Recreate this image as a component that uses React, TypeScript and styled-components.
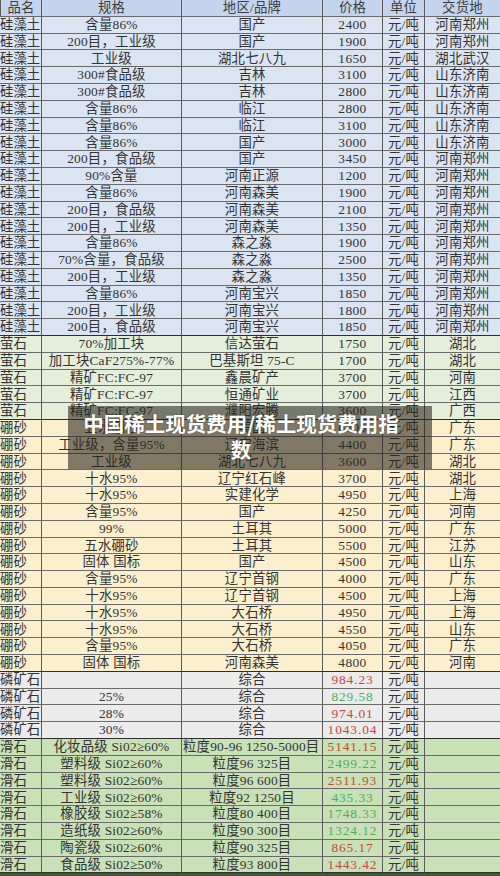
import React from 'react';
import styled, { createGlobalStyle } from 'styled-components';

const GlobalStyle = createGlobalStyle`
  html, body {
    margin: 0;
    padding: 0;
    background: #fff;
  }
  body {
    font-family: "Liberation Serif", "Noto Sans CJK SC", serif;
  }
`;

const Page = styled.div`
  position: relative;
  width: 500px;
  height: 876px;
  overflow: hidden;
  background: #3d5a33;
`;

const Table = styled.div`
  display: grid;
  grid-template-columns: 41px 140px 141px 60px 42px 76px;
  grid-auto-rows: 16.8px;
  border-left: 1px solid #5c5c5c;
  box-sizing: border-box;
`;

const Cell = styled.div<{ $bg: string; $align?: string; $color?: string; $thick?: boolean }>`
  display: flex;
  align-items: center;
  justify-content: ${p => p.$align || 'center'};
  box-sizing: border-box;
  background: ${p => p.$bg};
  color: ${p => p.$color || '#333'};
  border-right: 1px solid #5c5c5c;
  border-bottom: 1px solid ${p => (p.$thick ? '#2e2e2e' : '#6a6a6a')};
  font-size: 13.4px;
  line-height: 1;
  white-space: nowrap;
  overflow: visible;
  padding: 0 1px;
  letter-spacing: 0.2px;
`;

const NameCell = styled(Cell)`
  justify-content: flex-start;
  padding-left: 0;
  letter-spacing: 0;
  margin-left: -1px;
`;

const PriceCell = styled(Cell)`
  letter-spacing: ${p => (p.$color ? '0.9px' : '0.4px')};
`;

const Overlay = styled.div`
  position: absolute;
  left: 68px;
  top: 406px;
  width: 364px;
  box-sizing: border-box;
  padding: 4px 26px 7px 8px;
  background: rgba(40, 36, 28, 0.58);
  color: #fff;
  font-family: "Noto Sans CJK SC", "Noto Sans", sans-serif;
  font-weight: 700;
  font-size: 20.5px;
  line-height: 26px;
  text-align: center;
  text-shadow: 0 0 2px rgba(0, 0, 0, 0.35);
`;

type Row = [string, string, string, string, string?];

interface Group {
  name: string;
  bg: string;
  rows: Row[];
}

const RED = '#c8473c';
const GREEN = '#4fae58';

const groups: Group[] = [
  {
    name: '硅藻土',
    bg: '#dbe4f3',
    rows: [
      ['含量86%', '国产', '2400', '河南郑州'],
      ['200目，工业级', '国产', '1900', '河南郑州'],
      ['工业级', '湖北七八九', '1650', '湖北武汉'],
      ['300#食品级', '吉林', '3100', '山东济南'],
      ['300#食品级', '吉林', '2800', '山东济南'],
      ['含量86%', '临江', '2800', '山东济南'],
      ['含量86%', '临江', '3100', '山东济南'],
      ['含量86%', '国产', '3000', '山东济南'],
      ['200目，食品级', '国产', '3450', '河南郑州'],
      ['90%含量', '河南正源', '1200', '河南郑州'],
      ['含量86%', '河南森美', '1900', '河南郑州'],
      ['200目，食品级', '河南森美', '2100', '河南郑州'],
      ['200目，工业级', '河南森美', '1350', '河南郑州'],
      ['含量86%', '森之淼', '1900', '河南郑州'],
      ['70%含量，食品级', '森之淼', '2500', '河南郑州'],
      ['200目，工业级', '森之淼', '1350', '河南郑州'],
      ['含量86%', '河南宝兴', '1850', '河南郑州'],
      ['200目，工业级', '河南宝兴', '1800', '河南郑州'],
      ['200目，食品级', '河南宝兴', '1850', '河南郑州'],
    ],
  },
  {
    name: '萤石',
    bg: '#e3eedb',
    rows: [
      ['70%加工块', '信达萤石', '1750', '湖北'],
      ['加工块CaF275%-77%', '巴基斯坦 75-C', '1700', '湖北'],
      ['精矿FC:FC-97', '鑫晨矿产', '3700', '河南'],
      ['精矿FC:FC-97', '恒通矿业', '3700', '江西'],
      ['精矿FC:FC-97', '濮阳宏腾', '3600', '广西'],
    ],
  },
  {
    name: '硼砂',
    bg: '#fcefcd',
    rows: [
      ['五水硼砂', '美国', '6300', '广东'],
      ['工业级，含量95%', '辽宁海滨', '4400', '广东'],
      ['工业级', '湖北七八九', '3600', '湖北'],
      ['十水95%', '辽宁红石峰', '3700', '湖北'],
      ['十水95%', '实建化学', '4950', '上海'],
      ['含量95%', '国产', '4250', '河南'],
      ['99%', '土耳其', '5000', '广东'],
      ['五水硼砂', '土耳其', '5500', '江苏'],
      ['固体 国标', '国产', '4500', '山东'],
      ['含量95%', '辽宁首钢', '4000', '广东'],
      ['十水95%', '辽宁首钢', '4500', '上海'],
      ['十水95%', '大石桥', '4950', '上海'],
      ['十水95%', '大石桥', '4550', '山东'],
      ['含量95%', '大石桥', '4050', '广东'],
      ['固体 国标', '河南森美', '4800', '河南'],
    ],
  },
  {
    name: '磷矿石',
    bg: '#ebebeb',
    rows: [
      ['', '综合', '984.23', '', RED],
      ['25%', '综合', '829.58', '', GREEN],
      ['28%', '综合', '974.01', '', RED],
      ['30%', '综合', '1043.04', '', RED],
    ],
  },
  {
    name: '滑石',
    bg: '#c8e1b6',
    rows: [
      ['化妆品级 Si02≥60%', '粒度90-96 1250-5000目', '5141.15', '', RED],
      ['塑料级 Si02≥60%', '粒度96 325目', '2499.22', '', GREEN],
      ['塑料级 Si02≥60%', '粒度96 600目', '2511.93', '', RED],
      ['工业级 Si02≥60%', '粒度92 1250目', '435.33', '', GREEN],
      ['橡胶级 Si02≥58%', '粒度80 400目', '1748.33', '', GREEN],
      ['造纸级 Si02≥60%', '粒度90 300目', '1324.12', '', GREEN],
      ['陶瓷级 Si02≥60%', '粒度90 325目', '865.17', '', RED],
      ['食品级 Si02≥50%', '粒度93 800目', '1443.42', '', RED],
    ],
  },
];

const headers = ['品名', '规格', '地区/品牌', '价格', '单位', '交货地'];
const HEADER_BG = '#c4d4ed';

const App: React.FC = () => {
  return (
    <Page>
      <GlobalStyle />
      <Table>
        {headers.map(h => (
          <Cell key={h} $bg={HEADER_BG} $color="#3c3c3c">
            {h}
          </Cell>
        ))}
        {groups.map(group =>
          group.rows.map((row, i) => {
            const [spec, brand, price, place, priceColor] = row;
            const thick = i === group.rows.length - 1;
            const wide = brand.length > 12;
            return (
              <React.Fragment key={group.name + i}>
                <NameCell $bg={group.bg} $thick={thick}>
                  {group.name}
                </NameCell>
                <Cell $bg={group.bg} $thick={thick}>{spec}</Cell>
                <Cell $bg={group.bg} $thick={thick} $align={wide ? 'flex-start' : 'center'}>
                  {brand}
                </Cell>
                <PriceCell $bg={group.bg} $thick={thick} $color={priceColor}>
                  {price}
                </PriceCell>
                <Cell $bg={group.bg} $thick={thick}>元/吨</Cell>
                <Cell $bg={group.bg} $thick={thick}>{place}</Cell>
              </React.Fragment>
            );
          })
        )}
      </Table>
      <Overlay>中国稀土现货费用/稀土现货费用指数</Overlay>
    </Page>
  );
};

export default App;
